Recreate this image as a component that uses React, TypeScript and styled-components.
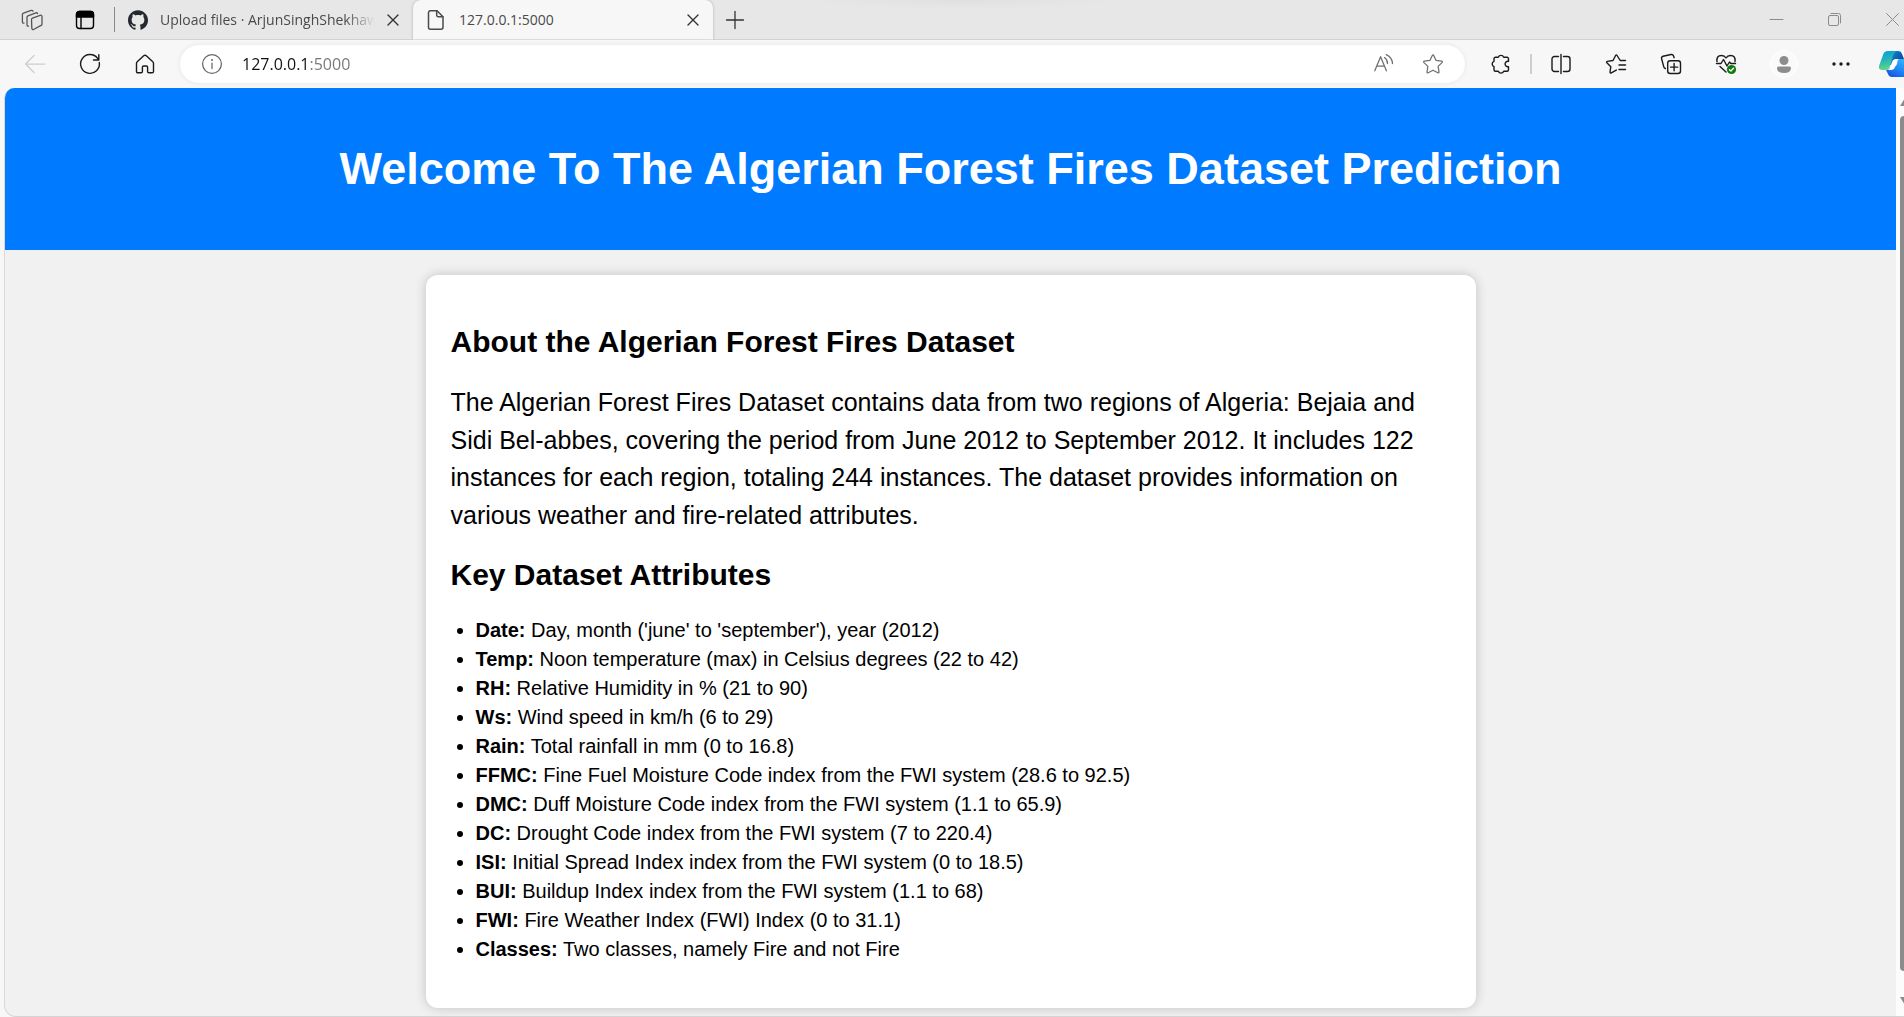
import React from "react";
import styled, { createGlobalStyle } from "styled-components";
import { SiGithub } from "react-icons/si";

const GlobalStyle = createGlobalStyle`
  *, *::before, *::after { box-sizing: border-box; }
  body {
    margin: 0;
    background: #f7f7f7;
    font-family: "Liberation Sans", Arial, sans-serif;
  }
`;

const uiFont = `"Segoe UI", "Open Sans", sans-serif`;

const Window = styled.div`
  display: flex;
  flex-direction: column;
  min-height: 100vh;
  overflow: hidden;
`;

/* ---------- tab strip ---------- */

const TabStrip = styled.div`
  display: flex;
  align-items: center;
  height: 40px;
  padding-left: 14px;
  border-bottom: 1px solid #d2d2d2;
  background: radial-gradient(ellipse 160px 9px at 962px 0, #e0e0e0, #e7e7e7) #e7e7e7;
  font-family: ${uiFont};
`;

const IconButton = styled.button<{ $tone?: string }>`
  display: flex;
  flex: none;
  align-items: center;
  justify-content: center;
  width: 36px;
  height: 36px;
  padding: 0;
  border: 0;
  background: none;
  color: ${(p) => p.$tone ?? "#1b1b1b"};

  svg {
    display: block;
    flex: none;
    overflow: visible;
  }
`;

const NewTabButton = styled(IconButton)`
  margin-left: 4px;
`;

const StripTools = styled.div`
  display: flex;
  gap: 17px;
`;

const Divider = styled.span<{ $color: string; $height: number; $width: number }>`
  flex: none;
  width: ${(p) => p.$width}px;
  height: ${(p) => p.$height}px;
  margin: 0 11px;
  background: ${(p) => p.$color};
`;

const Tab = styled.div<{ $active?: boolean }>`
  display: flex;
  flex: 0 1 ${(p) => (p.$active ? 300 : 287)}px;
  align-items: center;
  gap: ${(p) => (p.$active ? 13 : 12)}px;
  min-width: 0;
  height: ${(p) => (p.$active ? 40 : 39)}px;
  padding: 0 2px 0 ${(p) => (p.$active ? 13 : 2)}px;
  border-radius: 8px 8px 0 0;
  background: ${(p) => (p.$active ? "#f7f7f7" : "transparent")};
  box-shadow: ${(p) => (p.$active ? "0 0 3px rgba(0, 0, 0, 0.25)" : "none")};
  clip-path: ${(p) => (p.$active ? "inset(0 -4px 0 -4px)" : "none")};
  color: #4a4a4a;

  svg {
    flex: none;
  }
`;

const TabTitle = styled.span<{ $fade?: boolean }>`
  flex: 1;
  min-width: 0;
  margin-right: -12px;
  overflow: hidden;
  font-size: 14px;
  line-height: 20px;
  white-space: nowrap;
  mask-image: ${(p) => (p.$fade ? "linear-gradient(to left, transparent, #000 30px)" : "none")};
`;

const WindowControls = styled.div`
  display: flex;
  gap: 22px;
  margin-left: auto;
  margin-right: -6px;
`;

/* ---------- toolbar ---------- */

const Toolbar = styled.div`
  display: flex;
  align-items: center;
  height: 48px;
  padding-left: 17px;
  background: #f7f7f7;
`;

const ButtonGroup = styled.div<{ $gap: number; $before?: number }>`
  display: flex;
  align-items: center;
  gap: ${(p) => p.$gap}px;
  margin-left: ${(p) => p.$before ?? 0}px;
`;

const AddressBar = styled.form`
  display: flex;
  flex: 1;
  align-items: center;
  height: 38px;
  margin: 0 18px 0 17px;
  padding: 0 14px;
  border-radius: 19px;
  background: #fff;
  box-shadow: 0 0 5px rgba(0, 0, 0, 0.08);
`;

const AddressInput = styled.input`
  flex: 1;
  min-width: 0;
  margin-left: 12px;
  padding: 0;
  border: 0;
  outline: 0;
  background: linear-gradient(to right, #111 67px, #767676 67px);
  background-clip: text;
  -webkit-text-fill-color: transparent;
  color: #111;
  font-family: ${uiFont};
  font-size: 16px;
  line-height: 24px;
`;

const Avatar = styled.span`
  display: flex;
  align-items: center;
  justify-content: center;
  width: 28px;
  height: 28px;
  border: 1px solid #fff;
  border-radius: 50%;
  background: #fafafa;
  color: #8d8d8d;
`;

const CopilotButton = styled(IconButton)`
  justify-content: flex-start;
  width: 25px;
  margin-left: -1px;
  overflow: hidden;
`;

/* ---------- page ---------- */

const Viewport = styled.div`
  display: flex;
  flex: 1;
  margin-left: 4px;
  border-left: 1px solid #d9d9d9;
  border-bottom: 1px solid #d4d4d4;
  border-radius: 10px 0 0 12px;
  background: #f1f1f1;
  overflow: hidden;
`;

const Page = styled.main`
  flex: 1;
  min-width: 0;
  color: #000;
`;

const Hero = styled.header`
  padding: 56px 25px;
  background: #007bff;
  color: #fff;
  text-align: center;
`;

const HeroTitle = styled.h1`
  margin: 0;
  font-size: 45px;
  line-height: 50px;
`;

const Card = styled.section`
  max-width: 1050px;
  margin: 25px auto 8px;
  padding: 50px 25px 44px;
  border-radius: 12px;
  background: #fff;
  box-shadow: 0 0 12px rgba(0, 0, 0, 0.2);
`;

const SectionTitle = styled.h2`
  margin: 0 0 24px;
  font-size: 30px;
  line-height: 34px;
`;

const Intro = styled.p`
  margin: 25px 0 24px;
  font-size: 25px;
  line-height: 1.5;
`;

const AttributeList = styled.ul`
  margin: 0;
  padding-left: 25px;
  font-size: 20px;
  line-height: 29px;
`;

const ScrollTrack = styled.div`
  display: flex;
  flex: none;
  flex-direction: column;
  gap: 10px;
  width: 8px;
  padding: 10px 0 11px 4px;
  background: #fcfcfc;
  overflow: hidden;

  svg {
    flex: none;
  }
`;

const ScrollThumb = styled.div`
  flex: 1;
  width: 8px;
  margin-bottom: 16px;
  border-radius: 4px;
  background: #8b8b8b;
`;

/* ---------- icons ---------- */

type IconProps = { children: React.ReactNode; size?: number; width?: number };

const Icon = ({ children, size = 20, width = 1.25 }: IconProps) => (
  <svg
    width={size}
    height={size}
    viewBox={`0 0 ${size} ${size}`}
    fill="none"
    stroke="currentColor"
    strokeWidth={width}
    strokeLinecap="round"
    strokeLinejoin="round"
    aria-hidden="true"
  >
    {children}
  </svg>
);

const WorkspacesIcon = () => (
  <Icon width={1.3}>
    <path d="M9.5 9.6q0-1 1-1.4l7.6-2.9q1.900-.5 1.900 1.400v7.200q0 1-.9 1.500l-7.200 3.900q-1.900.8-2.100-1.200z" />
    <path d="M6.600 16.200q-1.600.2-1.600-1.500V7.300q0-1 1-1.400l7.800-3.100q1.400-.3 1.800.8" />
    <path d="M2 13.200q-1.600.2-1.600-1.400V4.500q0-1 1-1.400L9.200.4q1.400-.4 1.800.8" />
  </Icon>
);

const TabActionsIcon = () => (
  <Icon width={1.4}>
    <rect x="1.500" y="1.500" width="17" height="17" rx="3" />
    <path d="M1.500 7V4.500a3 3 0 0 1 3-3h11a3 3 0 0 1 3 3V7z" fill="currentColor" />
    <path d="M6 7v11.500" />
  </Icon>
);

const CloseIcon = () => (
  <Icon size={10} width={1.4}>
    <path d="M0 0l10 10M10 0L0 10" />
  </Icon>
);

const FileIcon = () => (
  <Icon width={1.5}>
    <path d="M4.500.7H11l6 6v10.500a2 2 0 0 1-2 2H4.500a2 2 0 0 1-2-2V2.700a2 2 0 0 1 2-2z" />
    <path d="M10.700.9v4.300a1.500 1.500 0 0 0 1.500 1.500h4.600" />
  </Icon>
);

const starPath = "M9.300 1.500q.7-1.400 1.400 0l2.400 4.900 5.400.8q1.500.3.5 1.400l-3.900 3.800.9 5.400q.1 1.500-1.200.9L10 16.200l-4.800 2.500q-1.300.6-1.200-.9l.9-5.400L1 8.600q-1-1.100.5-1.400l5.400-.8z";

const CopilotIcon = () => (
  <svg width="34" height="28" viewBox="0 0 34 28" aria-hidden="true">
    <defs>
      <linearGradient id="copilotTeal" x1="0" y1="0" x2="0.2" y2="1">
        <stop offset="0" stopColor="#0a9be0" />
        <stop offset="0.5" stopColor="#23b5b8" />
        <stop offset="1" stopColor="#5fd68a" />
      </linearGradient>
      <linearGradient id="copilotBlue" x1="0" y1="1" x2="0.7" y2="0">
        <stop offset="0" stopColor="#1746d8" />
        <stop offset="0.5" stopColor="#1e86f5" />
        <stop offset="1" stopColor="#35b4f8" />
      </linearGradient>
      <linearGradient id="copilotNavy" x1="0" y1="0" x2="1" y2="0.6">
        <stop offset="0" stopColor="#12a5dc" />
        <stop offset="1" stopColor="#0a3f9e" />
      </linearGradient>
    </defs>
    <path d="M9 1h10q3 0 4 3l2 5h-6q-3 0-4 3l-2 5-7-9z" fill="url(#copilotNavy)" />
    <path d="M9 1h9q-3 1-4 5l-3 10q-1 4-5 4H3q-4 0-3-4L4 5q1-4 5-4z" fill="url(#copilotTeal)" />
    <path d="M7 20q3 0 4-3h3q3 0 4-3l1-5h10q4 0 3 5l-3 9q-1 4-5 4H13q-3 0-4-3z" fill="url(#copilotBlue)" />
    <path d="M17 9h4q-3 0-4 4l-1 4q-1 3-4 3H9q2-1 3-5l1-3q1-3 4-3z" fill="#fff" />
  </svg>
);

const attributes = [
  ["Date:", "Day, month ('june' to 'september'), year (2012)"],
  ["Temp:", "Noon temperature (max) in Celsius degrees (22 to 42)"],
  ["RH:", "Relative Humidity in % (21 to 90)"],
  ["Ws:", "Wind speed in km/h (6 to 29)"],
  ["Rain:", "Total rainfall in mm (0 to 16.8)"],
  ["FFMC:", "Fine Fuel Moisture Code index from the FWI system (28.6 to 92.5)"],
  ["DMC:", "Duff Moisture Code index from the FWI system (1.1 to 65.9)"],
  ["DC:", "Drought Code index from the FWI system (7 to 220.4)"],
  ["ISI:", "Initial Spread Index index from the FWI system (0 to 18.5)"],
  ["BUI:", "Buildup Index index from the FWI system (1.1 to 68)"],
  ["FWI:", "Fire Weather Index (FWI) Index (0 to 31.1)"],
  ["Classes:", "Two classes, namely Fire and not Fire"],
];

const BrowserTabs = () => (
  <TabStrip>
    <StripTools>
      <IconButton aria-label="Workspaces" $tone="#555"><WorkspacesIcon /></IconButton>
      <IconButton aria-label="Tab actions menu" $tone="#000"><TabActionsIcon /></IconButton>
    </StripTools>
    <Divider $color="#8a8a8a" $height={25} $width={1} />
    <Tab>
      <SiGithub size={20} color="#24292f" />
      <TabTitle $fade>Upload files · ArjunSinghShekhawat</TabTitle>
      <IconButton aria-label="Close tab" $tone="#333"><CloseIcon /></IconButton>
    </Tab>
    <Tab $active>
      <FileIcon />
      <TabTitle>127.0.0.1:5000</TabTitle>
      <IconButton aria-label="Close tab" $tone="#333"><CloseIcon /></IconButton>
    </Tab>
    <NewTabButton aria-label="New tab" $tone="#333">
      <Icon width={1.3}><path d="M10 1.500v17M1.500 10h17" /></Icon>
    </NewTabButton>
    <WindowControls>
      <IconButton aria-label="Minimize" $tone="#8c8c8c">
        <Icon size={13} width={1}><path d="M0 6.500h13" /></Icon>
      </IconButton>
      <IconButton aria-label="Restore" $tone="#8c8c8c">
        <Icon size={13} width={1}>
          <rect x="0.500" y="2.500" width="10" height="10" rx="1.500" />
          <path d="M3 .5h7.500a2 2 0 0 1 2 2V10" />
        </Icon>
      </IconButton>
      <IconButton aria-label="Close" $tone="#8c8c8c">
        <Icon size={13} width={1}><path d="M.5.5l12 12M12.500.5l-12 12" /></Icon>
      </IconButton>
    </WindowControls>
  </TabStrip>
);

const BrowserToolbar = () => (
  <Toolbar>
    <ButtonGroup $gap={19}>
      <IconButton aria-label="Back" $tone="#cdcdcd">
        <Icon><path d="M9 1.500L.6 10 9 18.500M.6 10h19" /></Icon>
      </IconButton>
      <IconButton aria-label="Refresh">
        <Icon width={1.4}><path d="M19.300 8.500A9.400 9.400 0 1 1 17.600 4.400L18.800 6M18.800.8V6h-5.300" /></Icon>
      </IconButton>
      <IconButton aria-label="Home">
        <Icon width={1.4}>
          <path d="M1.500 9.300q0-1 .7-1.600l6.500-6q1.300-1.100 2.600 0l6.500 6q.7.600.7 1.600v8.200q0 1.300-1.300 1.300H13.900q-1.300 0-1.300-1.300v-4.200q0-1.300-1.300-1.300H8.700q-1.300 0-1.300 1.300v4.200q0 1.300-1.300 1.300H2.800q-1.300 0-1.300-1.300z" />
        </Icon>
      </IconButton>
    </ButtonGroup>
    <AddressBar>
      <IconButton type="button" aria-label="View site information" $tone="#666">
        <Icon>
          <circle cx="10" cy="10" r="9.400" />
          <path d="M10 9v5.500" />
          <circle cx="10" cy="6" r="0.400" fill="currentColor" />
        </Icon>
      </IconButton>
      <AddressInput aria-label="Address" defaultValue="127.0.0.1:5000" />
      <ButtonGroup $gap={13}>
        <IconButton type="button" aria-label="Read aloud" $tone="#6e6e6e">
          <Icon>
            <path d="M.8 16.800L6.600 2.700l5.800 14.100M2.800 12h7.600M10.500 3.600q3 2 3 6M12.300.6q6 3 6.200 9" />
          </Icon>
        </IconButton>
        <IconButton type="button" aria-label="Add to favorites" $tone="#6e6e6e">
          <Icon><path d={starPath} /></Icon>
        </IconButton>
      </ButtonGroup>
    </AddressBar>
    <IconButton aria-label="Extensions">
      <Icon width={1.4}>
        <path d="M4.500 3.200H7.300A2.900 2.900 0 0 1 12.700 3.200H16A1.500 1.500 0 0 1 17.500 4.700V7.400A2.700 2.700 0 1 0 17.500 12.600V15.800A1.500 1.500 0 0 1 16 17.300H12.700A2.900 2.900 0 0 1 7.300 17.300H4.500A1.500 1.500 0 0 1 3 15.800V12.700A2.900 2.900 0 0 1 3 7.300V4.700A1.500 1.500 0 0 1 4.500 3.200z" />
      </Icon>
    </IconButton>
    <Divider $color="#cfcfcf" $height={20} $width={2} />
    <ButtonGroup $gap={19}>
      <IconButton aria-label="Split screen">
        <Icon width={1.4}>
          <path d="M7.500 2.500H3.500a2.500 2.500 0 0 0-2.500 2.500v10a2.500 2.500 0 0 0 2.500 2.500h4M12.500 2.500h4a2.500 2.500 0 0 1 2.500 2.500v10a2.500 2.500 0 0 1-2.500 2.500h-4M10 .5v19" />
        </Icon>
      </IconButton>
      <IconButton aria-label="Favorites">
        <Icon width={1.4}>
          <path d="M19.500 6.500h-5.300L11.100 1.500q-.8-1.300-1.500 0L7 6.500l-5.700.9q-1.300.4-.4 1.400l3.900 4-.8 5.200q.1 1.400 1.300.9l5-2.800M13 11h6.500M13 15.500h6.500" />
        </Icon>
      </IconButton>
      <IconButton aria-label="Collections">
        <Icon width={1.4}>
          <rect x="6.700" y="6.700" width="12.800" height="12.800" rx="2.500" />
          <path d="M13.100 9.500v7.200M9.500 13.100h7.200M4.400 14.500q-1.300-.3-1.600-1.600L.6 4.800q-.4-2 1.500-2.500L10 .5q2-.3 2.600 1.500l.5 1.700" />
        </Icon>
      </IconButton>
      <IconButton aria-label="Browser essentials">
        <Icon width={1.4}>
          <path d="M1 7.500Q.2 1.500 5.500 1.500 8.500 1.500 10 4q1.500-2.500 4.500-2.500 5.300 0 4.500 6M.5 9.500h4.500l2.500-4 3.500 6.500 2.500-4 1.300 1.500h4.700M4 12.500l6 5.500" />
          <circle cx="15.500" cy="15.500" r="4.600" fill="#0f7b0f" stroke="none" />
          <path d="M13.500 15.700l1.400 1.300 2.600-2.800" stroke="#fff" />
        </Icon>
      </IconButton>
    </ButtonGroup>
    <ButtonGroup $gap={21} $before={22}>
      <IconButton aria-label="Profile">
        <Avatar>
          <svg width="14" height="17" viewBox="0 0 14 17" fill="currentColor" aria-hidden="true">
            <circle cx="7" cy="4.500" r="4.500" />
            <path d="M1.500 10.500h11A1.500 1.500 0 0 1 14 12q0 5-7 5t-7-5a1.500 1.500 0 0 1 1.500-1.500z" />
          </svg>
        </Avatar>
      </IconButton>
      <IconButton aria-label="Settings and more">
        <svg width="18" height="4" viewBox="0 0 18 4" fill="currentColor" aria-hidden="true">
          <circle cx="2" cy="2" r="1.700" />
          <circle cx="9" cy="2" r="1.700" />
          <circle cx="16" cy="2" r="1.700" />
        </svg>
      </IconButton>
      <CopilotButton aria-label="Copilot"><CopilotIcon /></CopilotButton>
    </ButtonGroup>
  </Toolbar>
);

export default function App() {
  return (
    <Window>
      <GlobalStyle />
      <BrowserTabs />
      <BrowserToolbar />
      <Viewport>
        <Page>
          <Hero>
            <HeroTitle>Welcome To The Algerian Forest Fires Dataset Prediction</HeroTitle>
          </Hero>
          <Card>
            <SectionTitle>About the Algerian Forest Fires Dataset</SectionTitle>
            <Intro>
              The Algerian Forest Fires Dataset contains data from two regions of Algeria: Bejaia
              and Sidi Bel-abbes, covering the period from June 2012 to September 2012. It includes
              122 instances for each region, totaling 244 instances. The dataset provides
              information on various weather and fire-related attributes.
            </Intro>
            <SectionTitle>Key Dataset Attributes</SectionTitle>
            <AttributeList>
              {attributes.map(([name, text]) => (
                <li key={name}>
                  <strong>{name}</strong> {text}
                </li>
              ))}
            </AttributeList>
          </Card>
        </Page>
        <ScrollTrack aria-hidden="true">
          <svg width="10" height="8" viewBox="0 0 10 8"><path d="M5 0l5 8H0z" fill="#8b8b8b" /></svg>
          <ScrollThumb />
          <svg width="10" height="8" viewBox="0 0 10 8"><path d="M5 8l5-8H0z" fill="#8b8b8b" /></svg>
        </ScrollTrack>
      </Viewport>
    </Window>
  );
}
